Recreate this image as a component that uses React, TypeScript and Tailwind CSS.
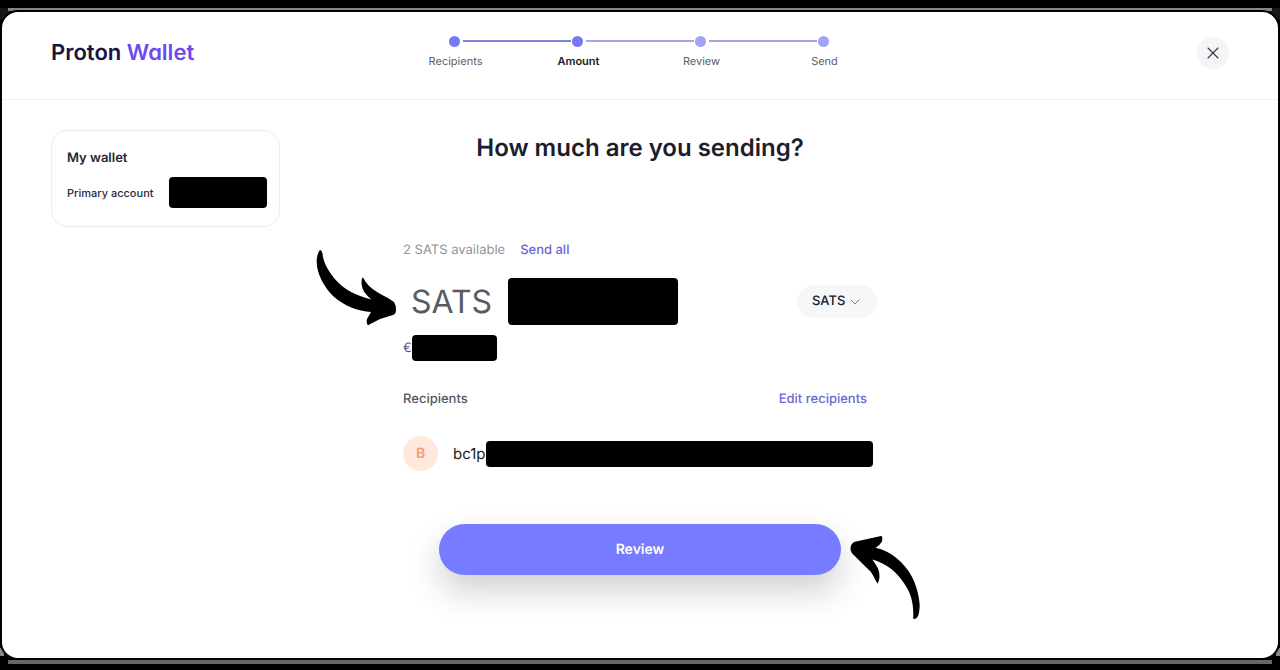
import React from "react";

type Step = {
  label: string;
  dot: string;
  before: string;
  after: string;
  text: string;
  current?: boolean;
};

const steps: Step[] = [
  { label: "Recipients", dot: "bg-[#7679f3]", before: "bg-transparent", after: "bg-[#7e82da]", text: "text-[#5c5e66]" },
  { label: "Amount", dot: "bg-[#7679f3]", before: "bg-[#7e82da]", after: "bg-[#a3a5e6]", text: "font-semibold text-[#191927]", current: true },
  { label: "Review", dot: "bg-[#a2a3f7]", before: "bg-[#a3a5e6]", after: "bg-[#a3a5e6]", text: "text-[#5c5e66]" },
  { label: "Send", dot: "bg-[#a2a3f7]", before: "bg-[#a3a5e6]", after: "bg-transparent", text: "text-[#5c5e66]" },
];

function Stepper() {
  return (
    <ol className="grid grid-cols-[repeat(4,123px)]">
      {steps.map((step) => (
        <li key={step.label} aria-current={step.current ? "step" : undefined} className="flex flex-col items-center gap-1">
          <div className="flex w-full items-center">
            <span className={`h-[2px] flex-1 ${step.before}`} />
            <span className={`mr-[3px] ml-px size-[11px] rounded-full ${step.dot}`} />
            <span className={`h-[2px] flex-1 ${step.after}`} />
          </div>
          <span className={`text-[11px] leading-[20px] ${step.text}`}>{step.label}</span>
        </li>
      ))}
    </ol>
  );
}

function Header() {
  return (
    <header className="grid h-[88px] grid-cols-[1fr_auto_1fr] items-center border-b border-[#f0f0f2] px-[49px] pb-[5px]">
      <a
        href="#home"
        className="justify-self-start text-[22px] leading-[28px] font-semibold text-[#1b1340] [font-feature-settings:'cv11','ss03']"
      >
        Proton <span className="text-[#6d4aef]">Wallet</span>
      </a>
      <Stepper />
      <button
        type="button"
        aria-label="Close"
        className="flex size-8 items-center justify-center justify-self-end rounded-full bg-[#f3f5f6]"
      >
        <svg viewBox="0 0 12 12" className="size-3" fill="none" stroke="#34353d" strokeWidth="1.1" strokeLinecap="round">
          <path d="M1 1 11 11M11 1 1 11" />
        </svg>
      </button>
    </header>
  );
}

function WalletCard() {
  return (
    <section className="flex w-[229px] flex-col rounded-2xl border border-[#ececef] pt-[17px] pr-3 pb-[18px] pl-[15px]">
      <h2 className="text-[13px] leading-[20px] font-semibold text-[#262636]">My wallet</h2>
      <div className="mt-[9px] flex items-center justify-between">
        <span className="text-[11px] leading-[16px] font-medium whitespace-nowrap text-[#2c2c3a]">Primary account</span>
        <span className="h-[31px] w-[98px] shrink-0 rounded bg-black" />
      </div>
    </section>
  );
}

function AmountForm() {
  return (
    <form className="relative flex flex-col" onSubmit={(event) => event.preventDefault()}>
      <h1 className="text-center text-[24px] leading-[32px] font-semibold whitespace-nowrap text-[#1d1d2e]">
        How much are you sending?
      </h1>

      <div className="mt-[76px] flex gap-[15px] text-[13px] leading-[20px]">
        <span className="text-[#929499]">2 SATS available</span>
        <button type="button" className="font-medium text-[#6a68d2] [text-rendering:inherit]">Send all</button>
      </div>

      <div className="mt-[18px] flex h-[47px] items-center">
        <label htmlFor="amount" className="ml-2 text-[32px] leading-[40px] text-[#5a5b62]">SATS</label>
        <input id="amount" type="text" className="ml-4 h-full w-[170px] rounded bg-black text-black outline-none" />
        <div className="relative ml-auto">
          <select
            aria-label="Unit"
            defaultValue="SATS"
            className="block h-[33px] w-20 appearance-none rounded-full bg-[#f5f7f9] pl-[15px] text-[13px] font-medium text-[#20202c] outline-none [text-rendering:inherit]"
          >
            <option>SATS</option>
            <option>BTC</option>
          </select>
          <svg
            viewBox="0 0 10 6"
            className="pointer-events-none absolute top-[14px] right-[17px] h-[6px] w-[10px]"
            fill="none"
            stroke="#7d7f88"
            strokeWidth="1"
            strokeLinecap="round"
            strokeLinejoin="round"
          >
            <path d="M1 1 5 5 9 1" />
          </svg>
        </div>
      </div>

      <div className="mt-[10px] flex h-[26px] items-center text-[13px] leading-[20px] text-[#5c5e66]">
        <span>€</span>
        <span className="h-full w-[85px] rounded bg-black" />
      </div>

      <div className="mt-[28px] flex justify-between pr-[10px] text-[13px] leading-[20px] font-medium">
        <h2 className="text-[#55575e]">Recipients</h2>
        <button type="button" className="text-[#6a68d2] [text-rendering:inherit]">Edit recipients</button>
      </div>

      <div className="mt-[27px] flex items-center pr-1">
        <span className="flex size-[35px] items-center justify-center rounded-full bg-[#ffe9dc] text-[14px] font-semibold text-[#eda273]">
          B
        </span>
        <span className="ml-[15px] text-[15px] leading-[20px] text-[#1d1d28]">bc1p</span>
        <span className="h-[26px] flex-1 rounded bg-black" />
      </div>

      <button
        type="submit"
        className="mx-[36px] mt-[53px] h-[51px] rounded-full bg-[#767bff] text-[14px] font-semibold text-white shadow-[0_16px_32px_rgba(30,40,50,0.22)] [text-rendering:inherit]"
      >
        Review
      </button>

      <svg viewBox="0 0 82 78" className="absolute top-[117px] left-[-87px] h-[78px] w-[82px]" fill="#000">
        <path d="M4 1Q5.500 1 6.500 4.500C7 12 11 20 18 29C28 41 41 47 55.500 50.500C49 45 44 40 46 29Q47 28 48 30C51 37 60 43 72 49L78 53Q80 56 80 61Q80 65 77 66L64 70L52 76.300Q50 74 51 70L55 63C42 62 28 57 17 47C8 38 0 24 .7 11Q1.500 3 4 1Z" />
      </svg>
      <svg viewBox="0 0 72 86" className="absolute top-[403px] left-[446px] h-[86px] w-[72px]" fill="#000">
        <path d="M6 6.700L32 1Q34 1 33 6.500Q31 10 26.700 12.700C39 15 51 24 59.300 35.700C66 45 70 59 70.700 70Q70.500 79 68.300 82.300Q66 85 64.200 83.500C65 69 62 58 55 48.300C48 37 38 29 23.300 24.500Q28 31 29.300 34.300Q32 42 28.700 48.700C26 45 25 41 21.700 36.700L3.700 19Q1 16 1.700 11.700Q2.500 8 6 6.700Z" />
      </svg>
    </form>
  );
}

export default function App() {
  return (
    <div className="relative flex min-h-screen flex-col bg-black pt-2 font-['Inter','Liberation_Sans',sans-serif] [text-rendering:geometricPrecision]">
      <span className="absolute top-2 left-0 size-3 bg-[#171717]" />
      <span className="absolute top-2 right-0 size-3 bg-[#171717]" />
      <span className="absolute bottom-[14px] left-0 h-2 w-1 bg-[#858585]" />
      <span className="absolute right-0 bottom-[14px] h-2 w-1 bg-[#858585]" />
      <div className="relative mx-2 h-[3px] bg-[#858585]" />
      <div className="relative -mt-px flex flex-1 flex-col rounded-[18px] border-2 border-black bg-white">
        <Header />
        <main className="grid flex-1 grid-cols-[1fr_474px_1fr] px-[49px]">
          <div className="pt-[30px]">
            <WalletCard />
          </div>
          <div className="pt-[32px] pb-10">
            <AmountForm />
          </div>
        </main>
      </div>
      <div className="mx-2 mb-[6px] h-1 bg-[#666]" />
    </div>
  );
}
